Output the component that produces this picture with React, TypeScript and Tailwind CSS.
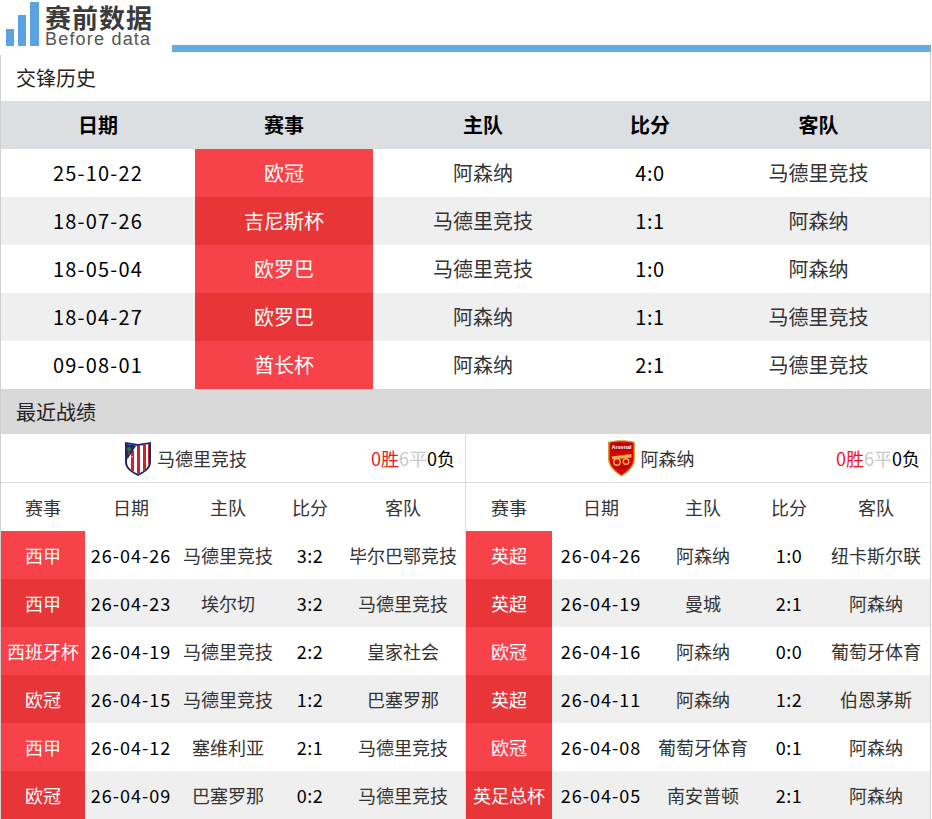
import React from 'react'

type H2H = [string, string, string, string, string]
type Rec = [string, string, string, string, string]

const h2h: H2H[] = [
  ['25-10-22', '欧冠', '阿森纳', '4:0', '马德里竞技'],
  ['18-07-26', '吉尼斯杯', '马德里竞技', '1:1', '阿森纳'],
  ['18-05-04', '欧罗巴', '马德里竞技', '1:0', '阿森纳'],
  ['18-04-27', '欧罗巴', '阿森纳', '1:1', '马德里竞技'],
  ['09-08-01', '酋长杯', '阿森纳', '2:1', '马德里竞技'],
]

const atmRows: Rec[] = [
  ['西甲', '26-04-26', '马德里竞技', '3:2', '毕尔巴鄂竞技'],
  ['西甲', '26-04-23', '埃尔切', '3:2', '马德里竞技'],
  ['西班牙杯', '26-04-19', '马德里竞技', '2:2', '皇家社会'],
  ['欧冠', '26-04-15', '马德里竞技', '1:2', '巴塞罗那'],
  ['西甲', '26-04-12', '塞维利亚', '2:1', '马德里竞技'],
  ['欧冠', '26-04-09', '巴塞罗那', '0:2', '马德里竞技'],
]

const arsRows: Rec[] = [
  ['英超', '26-04-26', '阿森纳', '1:0', '纽卡斯尔联'],
  ['英超', '26-04-19', '曼城', '2:1', '阿森纳'],
  ['欧冠', '26-04-16', '阿森纳', '0:0', '葡萄牙体育'],
  ['英超', '26-04-11', '阿森纳', '1:2', '伯恩茅斯'],
  ['欧冠', '26-04-08', '葡萄牙体育', '0:1', '阿森纳'],
  ['英足总杯', '26-04-05', '南安普顿', '2:1', '阿森纳'],
]

// 赛前数据 logo
function Logo() {
  return (
    <div className="flex w-[172px] h-[50px] pl-[6px]">
      <div className="flex items-end gap-[4px] h-[46px]">
        <div className="w-[8px] h-[17px] bg-[#5ba3e0]" />
        <div className="w-[8px] h-[31px] bg-[#5ba3e0]" />
        <div className="w-[9px] h-[44px] bg-[#5ba3e0]" />
      </div>
      <div className="ml-[6px] flex flex-col pt-[2px]">
        <span className="block h-[29px] text-[26px] leading-[29px] font-bold text-[#3b3b3b] tracking-[1px]">赛前数据</span>
        <span className="block h-[17px] text-[18px] leading-[17px] text-[#555] tracking-[1.2px] font-['Liberation_Sans',sans-serif]">Before data</span>
      </div>
    </div>
  )
}

function AtmBadge() {
  return (
    <svg width="30" height="37" viewBox="0 0 30 37">
      <path d="M2 2 L15 4 L28 2 L28 22 C28 29 21 33 15 36 C9 33 2 29 2 22 Z" fill="#1c2a6b" />
      <clipPath id="atmclip">
        <path d="M4 4 L15 6 L26 4 L26 22 C26 28 20 31.5 15 34 C10 31.5 4 28 4 22 Z" />
      </clipPath>
      <g clipPath="url(#atmclip)">
        <rect x="0" y="0" width="30" height="37" fill="#fff" />
        <rect x="8" y="0" width="3" height="37" fill="#d71f2a" />
        <rect x="14" y="0" width="3" height="37" fill="#d71f2a" />
        <rect x="20" y="0" width="3" height="37" fill="#d71f2a" />
        <rect x="25" y="0" width="3" height="37" fill="#d71f2a" />
        <path d="M0 0 L17 0 L0 26 Z" fill="#1c2a6b" />
        <circle cx="6" cy="9" r="2" fill="#2d7a3a" />
        <rect x="5.5" y="10" width="1" height="5" fill="#8b5a2b" />
        <circle cx="9" cy="17" r="0.7" fill="#fff" />
        <circle cx="11" cy="10" r="0.7" fill="#fff" />
        <circle cx="5" cy="19" r="0.7" fill="#fff" />
      </g>
    </svg>
  )
}

function ArsBadge() {
  return (
    <svg width="31" height="38" viewBox="0 0 30 38">
      <path d="M1.5 3 C8 0.5 22 0.5 28.5 3 L28.5 20 C28.5 28 21 34 15 37.5 C9 34 1.5 28 1.5 20 Z" fill="#c9a227" />
      <path d="M3 4 C9 2 21 2 27 4 L27 20 C27 27 20.5 32.5 15 36 C9.5 32.5 3 27 3 20 Z" fill="#db0007" />
      <path d="M4.5 5 C10 3.5 20 3.5 25.5 5 L25.5 11.5 L4.5 11.5 Z" fill="#b8000a" />
      <text x="15" y="10.2" textAnchor="middle" fontSize="5.5" fontWeight="bold" fill="#fff" fontFamily="Liberation Sans, sans-serif">Arsenal</text>
      <path d="M5 17.5 L25 15 L25 18.5 L6 20.5 Z" fill="#d9b44a" />
      <circle cx="10.5" cy="23" r="3.2" fill="none" stroke="#d9b44a" strokeWidth="1.4" />
      <circle cx="19.5" cy="22.5" r="2.8" fill="none" stroke="#d9b44a" strokeWidth="1.4" />
      <path d="M8 28.5 L22 28.5" stroke="#1a3c8c" strokeWidth="1.3" />
    </svg>
  )
}

function Record() {
  return (
    <span className="text-[18px] pr-[10px] whitespace-nowrap">
      <span className="text-[#f5141e]">0胜</span>
      <span className="text-[#c8c8c8]">6平</span>
      <span className="text-black">0负</span>
    </span>
  )
}

function TeamBlock({
  name,
  badge,
  rows,
  cols,
}: {
  name: string
  badge: React.ReactNode
  rows: Rec[]
  cols: string
}) {
  return (
    <div className="flex flex-col">
      <div className="flex items-center h-[49px] border-b border-[#dcdcdc]">
        <div className="flex-1 flex items-center justify-center gap-[4px] pr-[2px]">
          {badge}
          <span className="text-[18px] text-[#333]">{name}</span>
        </div>
        <Record />
      </div>
      <div className={`grid ${cols} h-[48px] items-center text-center text-[18px] text-[#333]`}>
        <span>赛事</span>
        <span>日期</span>
        <span>主队</span>
        <span>比分</span>
        <span>客队</span>
      </div>
      {rows.map((r, i) => (
        <div
          key={i}
          className={`grid ${cols} h-[48px] text-center text-[18px] text-[#333] ${i % 2 ? 'bg-[#efefef]' : 'bg-white'}`}
        >
          <span className={`flex items-center justify-center text-white ${i % 2 ? 'bg-[#e73538]' : 'bg-[#f8424a]'}`}>{r[0]}</span>
          <span className="flex items-center justify-center text-black tracking-[1px]">{r[1]}</span>
          <span className="flex items-center justify-center">{r[2]}</span>
          <span className="flex items-center justify-center text-black tracking-[0.5px]">{r[3]}</span>
          <span className="flex items-center justify-center">{r[4]}</span>
        </div>
      ))}
    </div>
  )
}

export default function App() {
  return (
    <div className="w-[932px] h-[819px] overflow-hidden bg-white font-['Noto_Sans_CJK_SC','Liberation_Sans',sans-serif]">
      {/* 顶部 logo + 蓝线 */}
      <div className="flex h-[55px]">
        <Logo />
        <div className="flex-1 flex flex-col pt-[45px] pr-[1px]">
          <div className="h-[7px] bg-[#64ace4]" />
          <div className="flex-1 border-r border-[#cfcfcf]" />
        </div>
      </div>

      <div className="w-[931px] border-x border-[#cfcfcf]">
        {/* 交锋历史 */}
        <div className="h-[46px] flex items-center pl-[15px] text-[20px] text-[#222]">交锋历史</div>
        <div className="grid grid-cols-[194px_178px_220px_114px_1fr] h-[48px] items-center text-center bg-[#dcdfe1] text-[20px] font-bold text-black">
          <span>日期</span>
          <span>赛事</span>
          <span>主队</span>
          <span>比分</span>
          <span>客队</span>
        </div>
        {h2h.map((r, i) => (
          <div
            key={i}
            className={`grid grid-cols-[194px_178px_220px_114px_1fr] h-[48px] text-center text-[20px] text-[#333] ${i % 2 ? 'bg-[#efefef]' : 'bg-white'}`}
          >
            <span className="flex items-center justify-center text-black tracking-[1.2px]">{r[0]}</span>
            <span className={`flex items-center justify-center text-white ${i % 2 ? 'bg-[#e73538]' : 'bg-[#f8424a]'}`}>{r[1]}</span>
            <span className="flex items-center justify-center">{r[2]}</span>
            <span className="flex items-center justify-center text-black tracking-[0.5px]">{r[3]}</span>
            <span className="flex items-center justify-center">{r[4]}</span>
          </div>
        ))}

        {/* 最近战绩 */}
        <div className="h-[45px] flex items-center pl-[15px] bg-[#d9d9d9] text-[20px] text-[#222]">最近战绩</div>
        <div className="grid grid-cols-[465px_1fr]">
          <div className="border-r border-[#dcdcdc]">
            <TeamBlock
              name="马德里竞技"
              badge={<AtmBadge />}
              rows={atmRows}
              cols="grid-cols-[84px_92px_102px_62px_1fr]"
            />
          </div>
          <TeamBlock
            name="阿森纳"
            badge={<ArsBadge />}
            rows={arsRows}
            cols="grid-cols-[86px_98px_106px_66px_1fr]"
          />
        </div>
      </div>
    </div>
  )
}
